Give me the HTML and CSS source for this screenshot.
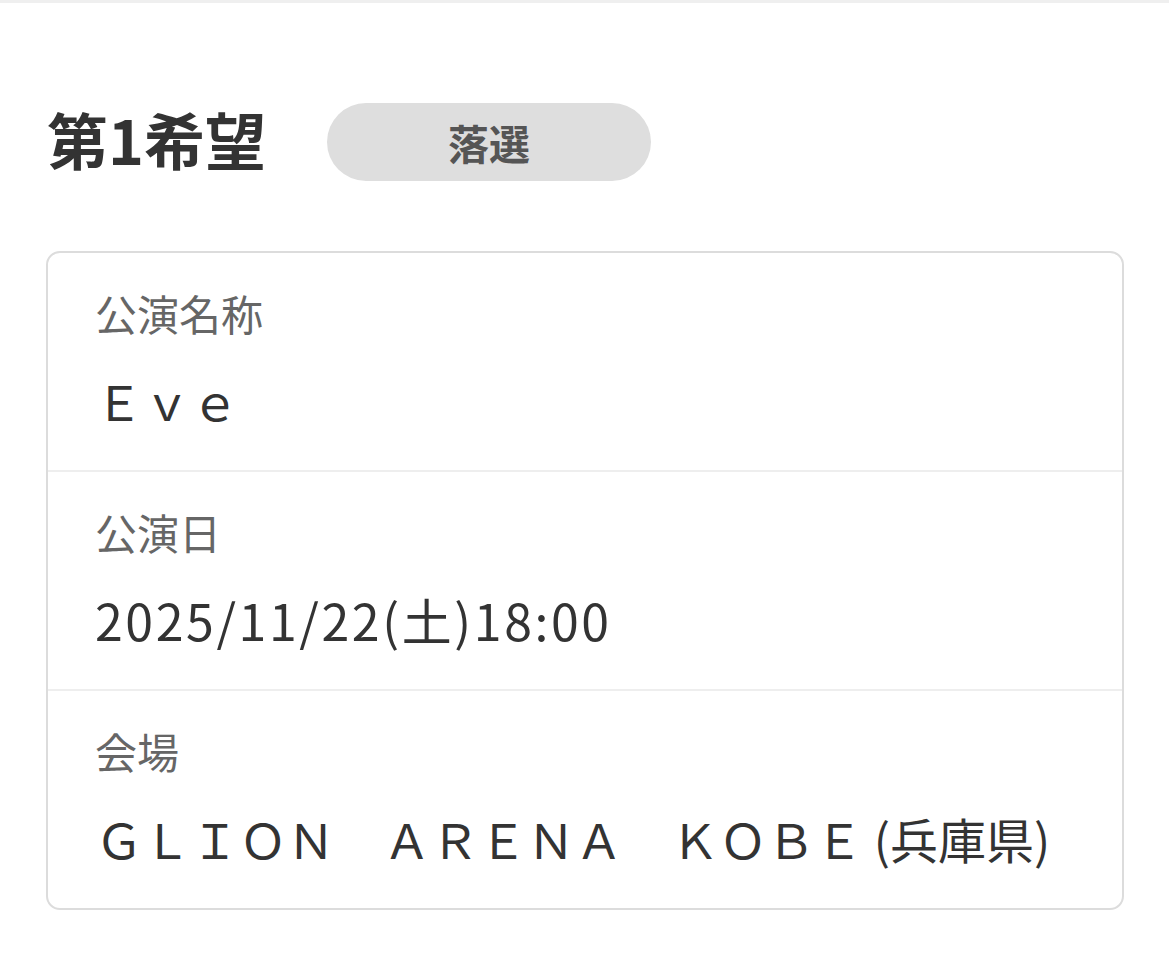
FILE: index.html
```html
<!DOCTYPE html>
<html lang="ja">
<head>
<meta charset="utf-8">
<title>第1希望</title>
<link rel="stylesheet" href="styles.css">
</head>
<body>
<div class="topbar"></div>
<main class="page">
  <div class="head">
    <h1 class="title">第1希望</h1>
    <span class="badge">落選</span>
  </div>
  <section class="card">
    <div class="row">
      <div class="label">公演名称</div>
      <div class="value">Ｅｖｅ</div>
    </div>
    <div class="row">
      <div class="label">公演日</div>
      <div class="value date">2025/11/22(土)18:00</div>
    </div>
    <div class="row">
      <div class="label">会場</div>
      <div class="value">ＧＬＩＯＮ　ＡＲＥＮＡ　ＫＯＢＥ (兵庫県)</div>
    </div>
  </section>
</main>
</body>
</html>
```

FILE: styles.css
```css
* { box-sizing: border-box; }
html, body { margin: 0; padding: 0; background: #fff; }
body {
  font-family: "Noto Sans CJK JP", "Noto Sans", sans-serif;
  color: #333;
}
.topbar { height: 3px; background: #efefef; }
.page { padding: 100px 45px 0 46px; }
.head {
  display: flex;
  align-items: center;
  gap: 61px;
  height: 78px;
}
.title {
  margin: 0 0 8px 1px;
  font-size: 61px;
  font-weight: 700;
  line-height: 1;
  color: #333;
}
.badge {
  display: flex;
  align-items: center;
  justify-content: center;
  width: 324px;
  height: 78px;
  border-radius: 39px;
  background: #dedede;
  color: #555;
  font-size: 41px;
  font-weight: 700;
}
.card {
  margin-top: 70px;
  border: 2px solid #dcdcdc;
  border-radius: 14px;
  width: 1078px;
}
.row {
  padding: 30px 47px 40px 47px;
  border-top: 2px solid #eeeeee;
  height: 219px;
}
.row:first-child { border-top: none; height: 217px; }
.label {
  font-size: 42px;
  line-height: 60px;
  color: #666;
}
.value {
  margin-top: 27px;
  font-size: 48px;
  line-height: 60px;
  color: #333;
  white-space: nowrap;
}
.date {
  font-size: 50px;
  letter-spacing: 2.6px;
}
```
